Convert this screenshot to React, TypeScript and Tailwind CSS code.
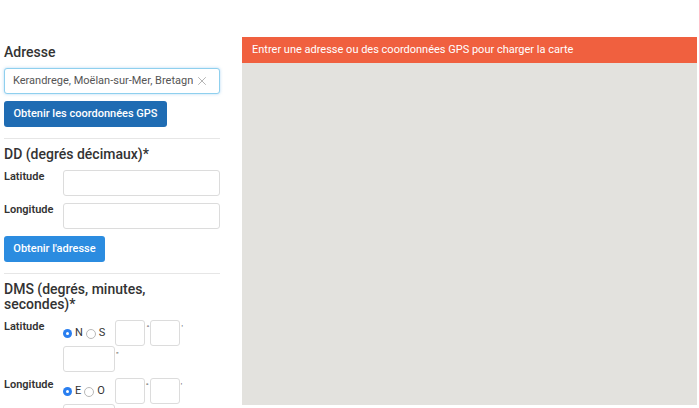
import { X } from 'lucide-react';

const font = { fontFamily: 'Roboto, "Liberation Sans", sans-serif' };

function TextBox({ className = '' }: { className?: string }) {
  return (
    <input
      type="text"
      className={`h-[26px] rounded-[3px] border border-[#dcdcdc] bg-white px-2 text-[11px] outline-none ${className}`}
    />
  );
}

function Radio({ checked, label }: { checked?: boolean; label: string }) {
  return (
    <span className="flex items-center gap-[3px]">
      {checked ? (
        <span className="flex h-[9px] w-[9px] items-center justify-center rounded-full bg-[#2a7ff0]">
          <span className="h-[3px] w-[3px] rounded-full bg-white" />
        </span>
      ) : (
        <span className="h-[10px] w-[10px] rounded-full border border-[#b9b9b9] bg-white" />
      )}
      <span className="text-[11px] text-[#333]">{label}</span>
    </span>
  );
}

function DmsRow({ label, a, b }: { label: string; a: string; b: string }) {
  return (
    <div className="flex">
      <div className="w-[59px] text-[11px] font-semibold leading-[14px] text-[#333]">{label}</div>
      <div className="flex w-[157px] flex-wrap items-start">
        <div className="flex h-[26px] items-center gap-[3px] pt-[1px]">
          <Radio checked label={a} />
          <Radio label={b} />
        </div>
        <div className="ml-[10px] flex items-start">
          <TextBox className="w-[30px]" />
          <span className="px-[1px] text-[8px] leading-[16px] text-[#555]">°</span>
          <TextBox className="w-[30px]" />
          <span className="px-[1px] text-[8px] leading-[16px] text-[#555]">'</span>
        </div>
        <div className="flex items-start">
          <TextBox className="w-[52px]" />
          <span className="px-[1px] text-[8px] leading-[18px] text-[#555]">"</span>
        </div>
      </div>
    </div>
  );
}

export default function App() {
  return (
    <div style={font} className="flex h-[408px] w-[699px] overflow-hidden bg-white text-[#333]">
      {/* Form column */}
      <div className="ml-[4px] w-[216px] shrink-0 pt-[42px]">
        <h2 className="text-[14px] font-medium leading-[20px] text-[#333]">Adresse</h2>
        <div className="mt-[6px] flex h-[26px] items-center rounded-[3px] border border-[#8fd0ee] bg-white pl-[8px] pr-[10px] shadow-[0_0_3px_rgba(102,175,233,0.5)]">
          <input
            type="text"
            readOnly
            value="Kerandrege, Moëlan-sur-Mer, Bretagne, France"
            className="min-w-0 flex-1 bg-transparent text-[11px] text-[#555] outline-none"
          />
          <X className="ml-[2px] h-[14px] w-[14px] shrink-0 text-[#999]" strokeWidth={1.25} />
        </div>
        <button className="mt-[7px] h-[26px] w-[163px] rounded-[3px] bg-[#1f6cb3] text-[11px] font-medium text-white">
          Obtenir les coordonnées GPS
        </button>

        <div className="mt-[11px] h-px bg-[#e6e6e6]" />

        <h2 className="mt-[5px] text-[14px] font-medium leading-[20px]">DD (degrés décimaux)*</h2>
        <div className="mt-[6px] flex">
          <div className="w-[59px] text-[11px] font-semibold leading-[14px]">Latitude</div>
          <TextBox className="w-[157px]" />
        </div>
        <div className="mt-[7px] flex">
          <div className="w-[59px] text-[11px] font-semibold leading-[14px]">Longitude</div>
          <TextBox className="w-[157px]" />
        </div>
        <button className="mt-[7px] h-[26px] w-[101px] rounded-[3px] bg-[#2b8ce0] text-[11px] font-medium text-white">
          Obtenir l'adresse
        </button>

        <div className="mt-[11px] h-px bg-[#e6e6e6]" />

        <h2 className="mt-[8px] text-[14px] font-medium leading-[15px]">DMS (degrés, minutes, secondes)*</h2>
        <div className="mt-[8px]">
          <DmsRow label="Latitude" a="N" b="S" />
        </div>
        <div className="mt-[6px]">
          <DmsRow label="Longitude" a="E" b="O" />
        </div>
      </div>

      {/* Map panel */}
      <div className="ml-[22px] mt-[37px] h-[368px] w-[455px] bg-[#e3e2de]">
        <div className="flex h-[26px] items-center bg-[#f0603f] px-[10px] text-[11px] text-white">
          Entrer une adresse ou des coordonnées GPS pour charger la carte
        </div>
      </div>
    </div>
  );
}
